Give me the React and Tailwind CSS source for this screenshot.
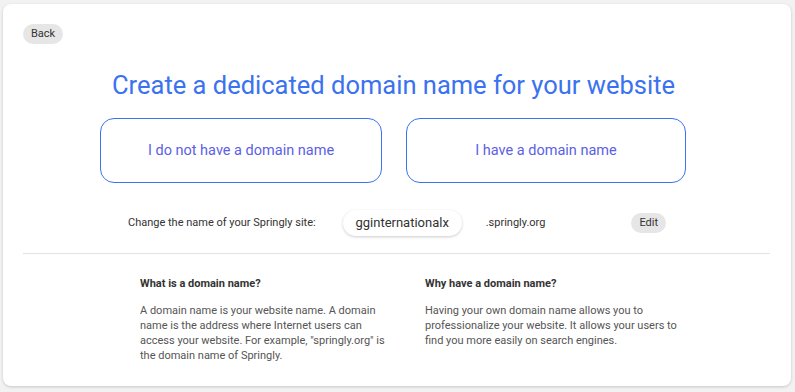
export default function App() {
  return (
    <div className="w-[795px] h-[392px] bg-[#f2f2f2] overflow-hidden" style={{ fontFamily: "Roboto, 'Liberation Sans', sans-serif" }}>
      <div className="ml-[3px] mt-[4px] w-[788px] h-[382px] bg-white rounded-[8px] shadow-[0_1px_3px_rgba(0,0,0,0.18)] flex flex-col">
        <div className="pt-[20px] pl-[20px] flex">
          <button className="h-[20px] px-[8px] rounded-full bg-[#e6e6e6] text-[11px] text-[#333] flex items-center">Back</button>
        </div>
        <h1 className="mt-[26px] pr-[7px] text-center text-[25.5px] leading-[30px] text-[#3a72ef] font-normal">Create a dedicated domain name for your website</h1>
        <div className="mt-[18px] flex justify-center gap-[24px] pr-[8px]">
          <button className="w-[282px] h-[65px] rounded-[14px] border border-[#3a72ef] text-[14.5px] text-[#5b5fe6]">I do not have a domain name</button>
          <button className="w-[280px] h-[65px] rounded-[14px] border border-[#3a72ef] text-[14.5px] text-[#5b5fe6]">I have a domain name</button>
        </div>
        <div className="mt-[27px] flex items-center h-[26px] pl-[125px]">
          <span className="text-[11px] text-[#333]">Change the name of your Springly site:</span>
          <div className="ml-[27px] w-[119px] h-[26px] rounded-full bg-white shadow-[0_1px_3px_rgba(0,0,0,0.2)] flex items-center justify-center text-[13px] text-[#333]">gginternationalx</div>
          <span className="ml-[24px] text-[11px] text-[#333]">.springly.org</span>
          <button className="ml-[86px] h-[20px] px-[8px] rounded-full bg-[#e6e6e6] text-[11px] text-[#333] flex items-center">Edit</button>
        </div>
        <div className="mt-[17px] mx-[20px] w-[747px] h-px bg-[#e3e3e3]"></div>
        <div className="mt-[22px] flex pl-[137px] gap-[32px]">
          <div className="w-[253px]">
            <h3 className="text-[11px] font-bold text-[#333] leading-[15px]">What is a domain name?</h3>
            <p className="mt-[12px] text-[11px] leading-[15px] text-[#555]">A domain name is your website name. A domain name is the address where Internet users can access your website. For example, "springly.org" is the domain name of Springly.</p>
          </div>
          <div className="w-[253px]">
            <h3 className="text-[11px] font-bold text-[#333] leading-[15px]">Why have a domain name?</h3>
            <p className="mt-[12px] text-[11px] leading-[15px] text-[#555]">Having your own domain name allows you to professionalize your website. It allows your users to find you more easily on search engines.</p>
          </div>
        </div>
      </div>
    </div>
  );
}
